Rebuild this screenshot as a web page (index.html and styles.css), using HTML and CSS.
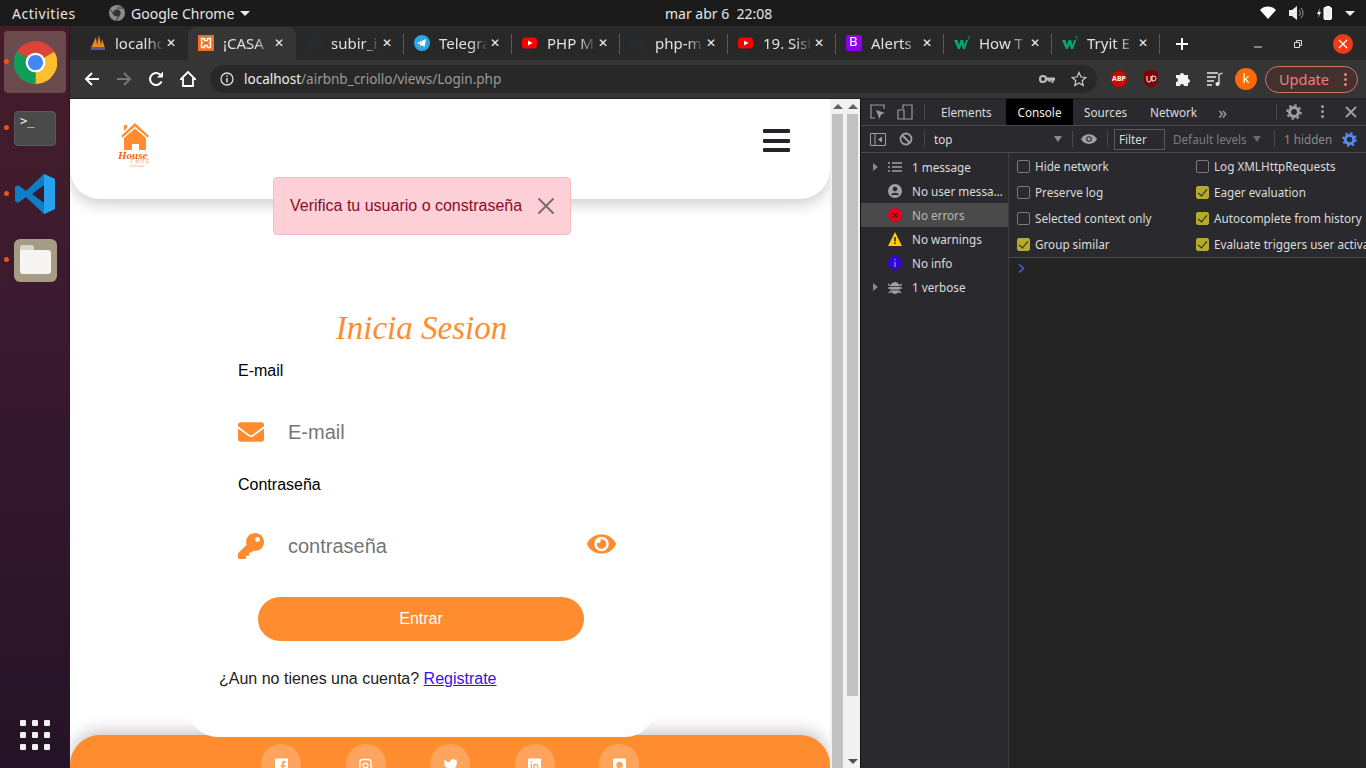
FILE: index.html
```html
<!DOCTYPE html>
<html lang="es">
<head>
  <meta charset="UTF-8" />
  <title>Login</title>
  <link rel="stylesheet" href="styles.css">
</head>
<body>
  <div class="topbar">
    <span class="activities">Activities</span>
    <span class="app-menu">
      <svg class="app-icon" width="16" height="16" viewBox="0 0 16 16"><circle cx="8" cy="8" r="8" fill="#8b8b8b"/><circle cx="8" cy="8" r="3.6" fill="#333"/><path d="M8 3h6M5 10 2 5M10 11l-3 5" stroke="#333" stroke-width="1"/></svg>
      Google Chrome
      <i class="caret"></i>
    </span>
    <span class="clock">mar abr 6&nbsp; 22:08</span>
    <span class="tray">
      <svg width="16" height="14" viewBox="0 0 16 14"><path d="M0 4a11 11 0 0 1 16 0L8 13z" fill="#fff"/></svg>
      <svg class="tray-sound" width="16" height="14" viewBox="0 0 16 14"><path d="M0 4h3l5-4v14l-5-4H0z" fill="#eee"/><path d="M10 4a4 4 0 0 1 0 6M12 2a7 7 0 0 1 0 10" stroke="#999" fill="none"/></svg>
      <svg class="tray-batt" width="16" height="14" viewBox="0 0 16 14"><path d="M3 2 0 8h2l-1 4 3-6H2z" fill="#fff"/><rect x="7" y="1.500" width="7.500" height="12" rx="1" fill="#eee" stroke="#fff"/><rect x="9" y="0" width="4" height="2" fill="#fff"/></svg>
      <i class="caret tray-caret"></i>
    </span>
  </div>

  <div class="desktop">
    <aside class="dock">
      <div class="dock-item active">
        <i class="dot"></i>
        <svg width="43" height="43" viewBox="0 0 48 48">
          <circle cx="24" cy="24" r="24" fill="#db4437"/>
          <path d="M24 24 45 12A24 24 0 0 1 24 48z" fill="#fbc02d"/>
          <path d="M24 24 24 48A24 24 0 0 1 3 12z" fill="#0f9d58"/>
          <circle cx="24" cy="24" r="11" fill="#fff"/>
          <circle cx="24" cy="24" r="8.500" fill="#4285f4"/>
        </svg>
      </div>
      <div class="dock-item">
        <i class="dot"></i>
        <div class="term-icon"><span>&gt;_</span></div>
      </div>
      <div class="dock-item">
        <i class="dot"></i>
        <svg width="42" height="42" viewBox="0 0 42 42">
          <path d="M30 1 41 6v30l-11 5L12 24 4 30l-3-2V14l3-2 8 6z" fill="#0e7fc4"/>
          <path d="M30 1 41 6v30l-11 5z" fill="#27a3ee"/>
          <path d="M30 12 18 21l12 9z" fill="#3a1a30"/>
        </svg>
      </div>
      <div class="dock-item">
        <i class="dot"></i>
        <div class="files-icon"><div class="folder"></div></div>
      </div>
      <div class="dock-grid">
        <i></i><i></i><i></i><i></i><i></i><i></i><i></i><i></i><i></i>
      </div>
    </aside>

    <div class="window">
      <div class="tabstrip">
        <div class="tab">
          <svg class="fav" viewBox="0 0 16 16"><path d="M1 13 6 2l1 8 2-10 2 10 1-6 3 9z" fill="#e98a1f"/><rect x="1" y="12" width="14" height="3" fill="#5a5a8c"/></svg>
          <span class="tab-title">localho</span><span class="tab-x">&#10005;</span>
        </div>
        <div class="tab tab-active">
          <svg class="fav" viewBox="0 0 16 16"><rect width="16" height="16" fill="#f36f1f"/><path d="M3.500 3.500h3v2h3v-2h3v3.500l-1 1 1 1v3.500h-3v-2h-3v2h-3V9l1-1-1-1z" fill="none" stroke="#fff" stroke-width="1.400"/></svg>
          <span class="tab-title">¡CASA</span><span class="tab-x">&#10005;</span>
        </div>
        <div class="tab">
          <svg class="fav" viewBox="0 0 16 16"><circle cx="8" cy="8" r="8" fill="#262b30"/></svg>
          <span class="tab-title">subir_i</span><span class="tab-x">&#10005;</span>
        </div>
        <div class="tab">
          <svg class="fav" viewBox="0 0 16 16"><circle cx="8" cy="8" r="8" fill="#2ca5e0"/><path d="M3 8l9-4-1.500 8-3-2-1.500 1.500V9l4-3-5 3z" fill="#fff"/></svg>
          <span class="tab-title">Telegra</span><span class="tab-x">&#10005;</span>
        </div>
        <div class="tab">
          <svg class="fav" viewBox="0 0 16 16"><rect y="2.500" width="15" height="11" rx="3" fill="#f00"/><path d="M6 5.500 10.500 8 6 10.500z" fill="#fff"/></svg>
          <span class="tab-title">PHP M</span><span class="tab-x">&#10005;</span>
        </div>
        <div class="tab">
          <svg class="fav" viewBox="0 0 16 16"><circle cx="8" cy="8" r="8" fill="#262b30"/></svg>
          <span class="tab-title">php-m</span><span class="tab-x">&#10005;</span>
        </div>
        <div class="tab">
          <svg class="fav" viewBox="0 0 16 16"><rect y="2.500" width="15" height="11" rx="3" fill="#f00"/><path d="M6 5.500 10.500 8 6 10.500z" fill="#fff"/></svg>
          <span class="tab-title">19. Sist</span><span class="tab-x">&#10005;</span>
        </div>
        <div class="tab">
          <svg class="fav" viewBox="0 0 16 16"><rect width="16" height="16" rx="2" fill="#8a00f0"/></svg>
          <span class="fav-letter">B</span>
          <span class="tab-title">Alerts</span><span class="tab-x">&#10005;</span>
        </div>
        <div class="tab">
          <svg class="fav" viewBox="0 0 16 16"><path d="M0 5h3.500l1.500 5 1.500-5h2.500l1.500 5 1.500-5H14l-3 9H9L7.500 9 6 14H4z" fill="#04aa6d"/><path d="M13.500 1.500h2l-1 1.200c1 0 1 2-.8 1.600" fill="none" stroke="#04aa6d" stroke-width=".7"/></svg>
          <span class="tab-title">How T</span><span class="tab-x">&#10005;</span>
        </div>
        <div class="tab">
          <svg class="fav" viewBox="0 0 16 16"><path d="M0 5h3.500l1.500 5 1.500-5h2.500l1.500 5 1.500-5H14l-3 9H9L7.500 9 6 14H4z" fill="#04aa6d"/><path d="M13.500 1.500h2l-1 1.200c1 0 1 2-.8 1.600" fill="none" stroke="#04aa6d" stroke-width=".7"/></svg>
          <span class="tab-title">Tryit E</span><span class="tab-x">&#10005;</span>
        </div>
        <span class="new-tab">
          <svg width="14" height="14" viewBox="0 0 14 14"><path d="M7 1v12M1 7h12" stroke="#fff" stroke-width="2"/></svg>
        </span>
        <div class="win-btns">
          <svg width="10" height="10" viewBox="0 0 10 10"><path d="M1 8h8" stroke="#ddd" stroke-width="1"/></svg>
          <svg width="10" height="10" viewBox="0 0 10 10"><path d="M1.500 3.500h5v5h-5zM3.500 3.500v-2h5v5h-2" fill="none" stroke="#ddd"/></svg>
          <span class="win-close">
            <svg width="10" height="10" viewBox="0 0 10 10"><path d="M1 1l8 8M9 1l-8 8" stroke="#fff" stroke-width="1.300"/></svg>
          </span>
        </div>
      </div>

      <div class="toolbar">
        <svg class="nav-icon" width="16" height="16" viewBox="0 0 16 16"><path d="M15 8H2M8 2 2 8l6 6" fill="none" stroke="#fff" stroke-width="2"/></svg>
        <svg class="nav-icon" width="16" height="16" viewBox="0 0 16 16"><path d="M1 8h13M8 2l6 6-6 6" fill="none" stroke="#777" stroke-width="2"/></svg>
        <svg class="nav-icon" width="16" height="16" viewBox="0 0 16 16"><path d="M13.500 10.500A6 6 0 1 1 12 3.500" fill="none" stroke="#fff" stroke-width="2"/><path d="M9 6.500h6v-6z" fill="#fff"/></svg>
        <svg class="nav-icon" width="16" height="16" viewBox="0 0 16 16"><path d="M8 1 1 8h2v7h10V8h2z" fill="none" stroke="#fff" stroke-width="1.800"/></svg>
        <div class="omnibox">
          <svg width="14" height="14" viewBox="0 0 14 14"><circle cx="7" cy="7" r="6" fill="none" stroke="#ddd" stroke-width="1.300"/><path d="M7 6v4.500M7 3.200v1.500" stroke="#ddd" stroke-width="1.500"/></svg>
          <span class="url"><b>localhost</b>/airbnb_criollo/views/Login.php</span>
          <svg class="omni-key" width="16" height="10" viewBox="0 0 16 10"><circle cx="4" cy="5" r="3" fill="none" stroke="#bbb" stroke-width="2.200"/><path d="M6 3.500h10v3h-1.500V9h-2V6.500h-1V8h-2V6.500H6z" fill="#bbb"/></svg>
          <svg class="omni-star" width="16" height="16" viewBox="0 0 16 16"><path d="M8 1.500l2 4.500 4.800.5-3.600 3.200 1 4.800L8 12l-4.200 2.500 1-4.800L1.200 6.500 6 6z" fill="none" stroke="#ccc" stroke-width="1.200"/></svg>
        </div>
        <div class="ext abp">ABP</div>
        <svg class="ext" width="16" height="18" viewBox="0 0 16 18"><path d="M1 2 8 0l7 2v8c0 4-4 6-7 8-3-2-7-4-7-8z" fill="#800000"/><path d="M4 6v4a2 2 0 0 0 4 0V6M9 6h1.500a2.500 2.500 0 0 1 0 5H9z" fill="none" stroke="#fff"/></svg>
        <svg class="ext" width="16" height="16" viewBox="0 0 16 16"><path d="M1 4h4a2 2 0 1 1 4 0h4v4a2 2 0 1 1 0 4v3H9a2 2 0 1 0-4 0H1v-4a2 2 0 1 0 0-4z" fill="#f2f2f2"/></svg>
        <svg class="ext" width="16" height="14" viewBox="0 0 16 14"><path d="M0 1h11M0 5h9M0 9h7M0 13h5" stroke="#e8e8e8" stroke-width="1.300"/><path d="M12 12V2.500L15.500 1" fill="none" stroke="#e8e8e8" stroke-width="1.300"/><circle cx="10.500" cy="12" r="2" fill="#e8e8e8"/></svg>
        <div class="avatar">k</div>
        <div class="update">Update<span class="update-dots"><i></i><i></i><i></i></span></div>
      </div>

      <div class="content">
        <div class="page">
          <header class="site-header">
            <svg class="logo" width="34" height="44" viewBox="0 0 34 44">
              <path d="M3 13 17 0l14 13-1.500 1.500L17 3.500 4.500 14.500z"/>
              <path d="M6 2h3v3L6 8z"/>
              <path d="M6 15 17 5.500 28 15v12h-7v-6h-7v6H6z"/>
              <text x="0" y="36" class="logo-house">House</text>
              <text x="12" y="40" class="logo-rent">rent</text>
              <text x="12" y="43.500" class="logo-small">en tu casa</text>
            </svg>
            <div class="burger"><i></i><i></i><i></i></div>
          </header>

          <div class="alert">
            <span>Verifica tu usuario o constraseña</span>
            <svg width="18" height="18" viewBox="0 0 18 18"><path d="M1.500 1.500l15 15M16.500 1.500l-15 15" stroke="#7d6a6e" stroke-width="2"/></svg>
          </div>

          <main class="card">
            <h2 class="card-title">Inicia Sesion</h2>
            <form class="login-form">
              <label class="field-label">E-mail</label>
              <div class="field">
                <svg class="field-icon" width="26" height="26" viewBox="0 0 512 512"><path d="M502.3 190.8c3.900-3.100 9.700-.2 9.700 4.700V400c0 26.500-21.500 48-48 48H48c-26.500 0-48-21.500-48-48V195.600c0-5 5.700-7.800 9.700-4.700 22.400 17.400 52.100 39.500 154.100 113.600 21.100 15.400 56.700 47.800 92.200 47.600 35.700.3 72-32.800 92.300-47.600 102-74.100 131.600-96.300 154-113.700zM256 320c23.200.4 56.600-29.200 73.400-41.400 132.700-96.300 142.800-104.700 173.400-128.700 5.800-4.500 9.200-11.500 9.200-18.900v-19c0-26.500-21.500-48-48-48H48C21.500 64 0 85.500 0 112v19c0 7.400 3.400 14.300 9.200 18.900 30.600 23.900 40.700 32.400 173.400 128.700 16.800 12.200 50.200 41.800 73.400 41.400z"/></svg>
                <input class="field-input" type="text" placeholder="E-mail">
              </div>
              <label class="field-label label-pass">Contraseña</label>
              <div class="field">
                <svg class="field-icon" width="26" height="26" viewBox="0 0 512 512"><path d="M512 176.001C512 273.203 433.202 352 336 352c-11.220 0-22.190-1.062-32.827-3.069l-24.012 27.014A23.999 23.999 0 0 1 261.223 384H224v40c0 13.255-10.745 24-24 24h-40v40c0 13.255-10.745 24-24 24H24c-13.255 0-24-10.745-24-24v-78.059c0-6.365 2.529-12.470 7.029-16.971l161.802-161.802C163.108 213.814 160 195.271 160 176 160 78.798 238.797.001 335.999 0 433.488-.001 512 78.511 512 176.001zM336 128c0 26.510 21.490 48 48 48s48-21.490 48-48-21.490-48-48-48-48 21.490-48 48z"/></svg>
                <input class="field-input" type="password" placeholder="contraseña">
                <svg class="eye" width="29" height="26" viewBox="0 0 576 512"><path d="M572.520 241.400C518.290 135.590 410.930 64 288 64S57.680 135.640 3.480 241.410a32.350 32.350 0 0 0 0 29.190C57.710 376.410 165.070 448 288 448s230.320-71.640 284.520-177.410a32.350 32.350 0 0 0 0-29.190zM288 400a144 144 0 1 1 144-144 143.930 143.930 0 0 1-144 144zm0-240a95.310 95.310 0 0 0-25.310 3.790 47.850 47.850 0 0 1-66.900 66.900A95.780 95.780 0 1 0 288 160z"/></svg>
              </div>
              <button class="btn-enter" type="button">Entrar</button>
            </form>
            <p class="register">¿Aun no tienes una cuenta? <a href="#">Registrate</a></p>
          </main>

          <footer class="site-footer">
            <span class="social"><svg viewBox="0 0 14 14"><path d="M1 0h12a1 1 0 0 1 1 1v13H9.500V9H11l.3-2H9.500V5.500c0-.6.3-1 1-1h1V2.500H10C8 2.500 7.500 4 7.500 5.500V7H6v2h1.500v5H0V1a1 1 0 0 1 1-1z"/></svg></span>
            <span class="social"><svg viewBox="0 0 14 14"><rect x="1" y="1" width="12" height="13" rx="3" fill="none" stroke="#fff" stroke-width="1.500"/><circle cx="7" cy="7.500" r="2.500" fill="none" stroke="#fff" stroke-width="1.500"/></svg></span>
            <span class="social"><svg viewBox="0 0 14 14"><path d="M0 1c2 2 4 3 6.500 3C6.500 1 10-.5 12 1.500L14 1l-1 2 1 .5c0 5-3 10-9 10-2 0-3.500-.5-5-1.500 2 0 3.500-.5 4.500-1.500C2 10 .5 8 0 6.500h1.500C.3 5 0 3 0 1z"/></svg></span>
            <span class="social"><svg viewBox="0 0 14 14"><path d="M1 0h12a1 1 0 0 1 1 1v13H0V1a1 1 0 0 1 1-1z"/><path d="M3.500 3v1.500M3.500 6v6M6.500 12V6M6.500 8c1-2.500 4-2 4 .5V12" fill="none" stroke="#ffa45c" stroke-width="1.500"/></svg></span>
            <span class="social"><svg viewBox="0 0 14 14"><path d="M1 0h12a1 1 0 0 1 1 1v13H0V1a1 1 0 0 1 1-1z"/><circle cx="7" cy="7" r="3.500" fill="#ffa45c"/></svg></span>
          </footer>
        </div>

        <div class="scrollbar"><i class="arrow-up"></i><i class="thumb thumb-full"></i></div>
        <div class="scrollbar"><i class="arrow-up"></i><i class="thumb thumb-short"></i><i class="arrow-down"></i></div>

        <section class="devtools">
          <div class="dt-tabs">
            <svg class="dt-icon" width="16" height="16" viewBox="0 0 16 16"><path d="M5 14H1V1h13v4" fill="none" stroke="#9a9a9a" stroke-width="1.200"/><path d="M6 6l9 3-4 1.500L9.500 15z" fill="#9a9a9a"/></svg>
            <svg class="dt-icon dt-device" width="16" height="16" viewBox="0 0 16 16"><path d="M6 5V1h9v14H6M1 6h6v9H1z" fill="none" stroke="#9a9a9a" stroke-width="1.200"/></svg>
            <i class="dt-sep sep-tabs"></i>
            <span class="dt-tab tab-elements">Elements</span>
            <span class="dt-tab dt-tab-on">Console</span>
            <span class="dt-tab tab-sources">Sources</span>
            <span class="dt-tab tab-network">Network</span>
            <span class="dt-more">&raquo;</span>
            <i class="dt-sep sep-more"></i>
            <svg class="dt-icon" width="16" height="16" viewBox="0 0 16 16"><circle cx="8" cy="8" r="4.500" fill="none" stroke="#a0a0a0" stroke-width="3"/><circle cx="8" cy="8" r="6.800" fill="none" stroke="#a0a0a0" stroke-width="2" stroke-dasharray="2.500 2.840"/></svg>
            <span class="dt-dots"><i></i><i></i><i></i></span>
            <svg class="dt-close" width="12" height="12" viewBox="0 0 12 12"><path d="M1 1l10 10M11 1 1 11" stroke="#a0a0a0" stroke-width="1.800"/></svg>
          </div>
          <div class="dt-filter">
            <svg class="dt-icon" width="16" height="13" viewBox="0 0 16 13"><path d="M.5.500h15v12H.5zM5 .5v12" fill="none" stroke="#a0a0a0"/><path d="M12 3.500v6L8 6.500z" fill="#a0a0a0"/></svg>
            <svg class="dt-icon dt-block" width="14" height="14" viewBox="0 0 14 14"><circle cx="7" cy="7" r="5.500" fill="none" stroke="#a0a0a0" stroke-width="1.800"/><path d="M3 3l8 8" stroke="#a0a0a0" stroke-width="1.800"/></svg>
            <i class="dt-sep sep-block"></i>
            <span class="ctx">top</span>
            <i class="tri ctx-tri"></i>
            <i class="dt-sep sep-ctx"></i>
            <svg class="dt-eye" width="16" height="10" viewBox="0 0 16 10"><path d="M0 5c3-6.500 13-6.500 16 0-3 6.500-13 6.500-16 0z" fill="#a0a0a0"/><circle cx="8" cy="5" r="2.800" fill="#2a2a2e"/><circle cx="8" cy="5" r="1.700" fill="#a0a0a0"/></svg>
            <i class="dt-sep sep-eye"></i>
            <span class="filter-box">Filter</span>
            <span class="levels">Default levels</span>
            <i class="tri levels-tri"></i>
            <i class="dt-sep sep-levels"></i>
            <span class="hidden-count">1 hidden</span>
            <svg class="dt-gear" width="15" height="15" viewBox="0 0 16 16"><circle cx="8" cy="8" r="4.500" fill="none" stroke="#5b8cf5" stroke-width="3"/><circle cx="8" cy="8" r="6.800" fill="none" stroke="#5b8cf5" stroke-width="2" stroke-dasharray="2.500 2.840"/></svg>
          </div>
          <div class="dt-body">
            <div class="dt-side">
              <div class="side-row"><i class="side-tri"></i><svg width="14" height="14" viewBox="0 0 14 14"><path d="M0 3h2M4 3h10M0 7h2M4 7h10M0 11h2M4 11h10" stroke="#a0a0a0" stroke-width="1.500"/></svg><span>1 message</span></div>
              <div class="side-row"><svg width="14" height="14" viewBox="0 0 14 14"><circle cx="7" cy="7" r="7" fill="#a0a0a0"/><circle cx="7" cy="5" r="2.300" fill="#2a2a2e"/><path d="M3 11c1-3 7-3 8 0z" fill="#2a2a2e"/></svg><span>No user messa…</span></div>
              <div class="side-row side-on"><svg width="14" height="14" viewBox="0 0 14 14"><circle cx="7" cy="7" r="7" fill="#e8001c"/><path d="M4.500 4.500l5 5M9.500 4.500l-5 5" stroke="#70101a" stroke-width="1.500"/></svg><span>No errors</span></div>
              <div class="side-row"><svg width="14" height="14" viewBox="0 0 14 14"><path d="M7 0l7 14H0z" fill="#fc0"/><path d="M7 5v4.500M7 10.500V12" stroke="#222" stroke-width="1.500"/></svg><span>No warnings</span></div>
              <div class="side-row"><svg width="14" height="14" viewBox="0 0 14 14"><circle cx="7" cy="7" r="7" fill="#3006d8"/><path d="M7 6v5M7 3v1.500" stroke="#8a78e8" stroke-width="1.500"/></svg><span>No info</span></div>
              <div class="side-row"><i class="side-tri"></i><svg width="14" height="14" viewBox="0 0 14 14"><ellipse cx="7" cy="8" rx="5" ry="6" fill="#a0a0a0"/><path d="M0 4l3 2M14 4l-3 2M0 8h3M14 8h-3M1 13l2-2M13 13l-2-2" stroke="#a0a0a0" stroke-width="1.500"/><path d="M2 6.500h10M2 10h10" stroke="#2a2a2e" stroke-width=".8"/></svg><span>1 verbose</span></div>
            </div>
            <div class="dt-main">
              <div class="settings">
                <label class="opt"><i class="box"></i>Hide network</label>
                <label class="opt"><i class="box"></i>Log XMLHttpRequests</label>
                <label class="opt"><i class="box"></i>Preserve log</label>
                <label class="opt"><i class="box on"></i>Eager evaluation</label>
                <label class="opt"><i class="box"></i>Selected context only</label>
                <label class="opt"><i class="box on"></i>Autocomplete from history</label>
                <label class="opt"><i class="box on"></i>Group similar</label>
                <label class="opt"><i class="box on"></i>Evaluate triggers user activa</label>
              </div>
              <div class="prompt">
                <svg width="7" height="9" viewBox="0 0 7 9"><path d="M1 .500 5.500 4.500 1 8.500" fill="none" stroke="#4a5fe0" stroke-width="1.500"/></svg>
              </div>
            </div>
          </div>
        </section>
      </div>
    </div>
  </div>
</body>
</html>
```
FILE: styles.css
```css
* {
  box-sizing: border-box;
}
html, body {
  margin: 0;
  height: 768px;
  overflow: hidden;
}
body {
  font-family: 'Noto Sans', 'Open Sans', sans-serif;
  background: #1c1c1c;
  color: #eee;
}
i {
  display: block;
  font-style: normal;
}

/* ubuntu top bar */
.topbar {
  height: 26px;
  background: #1b1b1b;
  display: flex;
  align-items: center;
  font-size: 14px;
  color: #e6e6e6;
  position: relative;
}
.activities {
  margin-left: 12px;
  width: 97px;
  letter-spacing: .55px;
}
.app-menu {
  display: flex;
  align-items: center;
}
.app-icon {
  margin-right: 6px;
}
.caret {
  width: 0;
  height: 0;
  border-left: 5px solid transparent;
  border-right: 5px solid transparent;
  border-top: 5px solid #eee;
  margin-left: 6px;
}
.clock {
  position: absolute;
  left: 665px;
  top: 4px;
  font-size: 14px;
}
.tray {
  margin-left: auto;
  margin-right: 11px;
  display: flex;
  align-items: center;
}
.tray-sound {
  margin-left: 13px;
}
.tray-batt {
  margin-left: 12px;
}
.tray-caret {
  margin-left: 12px;
}

.desktop {
  display: flex;
  height: 742px;
}

/* dock */
.dock {
  width: 70px;
  background: linear-gradient(#451c28, #3a1a30 40%, #241326);
  display: flex;
  flex-direction: column;
  padding: 5px 4px 0;
  position: relative;
  border-right: 1px solid #2b1622;
}
.dock-item {
  width: 62px;
  height: 62px;
  margin-bottom: 4px;
  border-radius: 4px;
  display: flex;
  align-items: center;
  justify-content: center;
  position: relative;
}
.dock-item.active {
  background: #6b4a4e;
}
.dot {
  position: absolute;
  left: 0;
  top: 28px;
  width: 5px;
  height: 5px;
  border-radius: 50%;
  background: #e95420;
}
.term-icon {
  width: 42px;
  height: 35px;
  border-radius: 4px;
  background: #4a4a4a;
  border: 1px solid #5a5a5a;
  font-family: 'DejaVu Sans Mono', monospace;
  font-size: 12px;
  line-height: 12px;
  padding: 3px 5px;
  color: #eee;
}
.files-icon {
  width: 43px;
  height: 43px;
  border-radius: 6px;
  background: #a49c86;
  display: flex;
  align-items: center;
  justify-content: center;
}
.folder {
  width: 31px;
  height: 24px;
  margin-top: 4px;
  border-radius: 0 3px 3px 3px;
  background: #f6f5f2;
  position: relative;
}
.folder::before {
  content: '';
  position: absolute;
  left: 0;
  top: -5px;
  width: 14px;
  height: 5px;
  border-radius: 3px 3px 0 0;
  background: #d8d5cc;
}
.dock-grid {
  position: absolute;
  left: 20px;
  top: 694px;
  display: grid;
  grid-template-columns: repeat(3, 6px);
  gap: 6px;
}
.dock-grid i {
  height: 6px;
  border-radius: 1px;
  background: #f0f0f0;
}

.window {
  flex: 1;
  display: flex;
  flex-direction: column;
  min-width: 0;
}

/* tabs */
.tabstrip {
  height: 34px;
  background: #282828;
  display: flex;
  padding: 1px 0 0 10px;
  position: relative;
}
.tab {
  width: 108px;
  height: 33px;
  display: flex;
  align-items: center;
  padding: 0 11px 2px 10px;
  font-size: 15px;
  color: #e0e0e0;
  position: relative;
  flex: none;
}
.tab::after {
  content: '';
  position: absolute;
  right: 0;
  top: 7px;
  width: 1px;
  height: 20px;
  background: #5a5a5a;
}
.tab:first-child::after {
  display: none;
}
.tab-active {
  background: #353535;
  border-radius: 8px 8px 0 0;
}
.tab-active::after {
  display: none;
}
.fav {
  width: 16px;
  height: 16px;
  flex: none;
  margin-right: 9px;
}
.fav-letter {
  position: absolute;
  left: 13px;
  top: 5px;
  font-size: 13px;
  color: #fff;
}
.tab-title {
  flex: 1;
  overflow: hidden;
  white-space: nowrap;
  -webkit-mask-image: linear-gradient(90deg, #000 65%, transparent 98%);
  mask-image: linear-gradient(90deg, #000 65%, transparent 98%);
}
.tab-x {
  width: 12px;
  font-size: 12px;
  color: #eee;
  flex: none;
  text-align: center;
}
.new-tab {
  margin-left: 15px;
  display: flex;
  align-items: center;
}
.win-btns {
  margin-left: auto;
  margin-right: 13px;
  display: flex;
  align-items: center;
  gap: 30px;
}
.win-close {
  width: 20px;
  height: 20px;
  border-radius: 50%;
  background: #f03a17;
  display: flex;
  align-items: center;
  justify-content: center;
}

/* toolbar */
.toolbar {
  height: 38px;
  background: #353535;
  display: flex;
  align-items: center;
  padding-left: 14px;
}
.nav-icon {
  margin-right: 16px;
  flex: none;
}
.omnibox {
  width: 887px;
  height: 28px;
  margin-left: -2px;
  border-radius: 14px;
  background: #282828;
  display: flex;
  align-items: center;
  padding: 0 10px;
}
.url {
  margin-left: 10px;
  font-size: 13.500px;
  color: #9a9a9a;
}
.url b {
  font-weight: 400;
  color: #eee;
}
.omni-key {
  margin-left: auto;
}
.omni-star {
  margin-left: 16px;
}
.ext {
  margin-left: 16px;
  flex: none;
}
.ext.abp {
  margin-left: 14px;
  width: 16px;
  height: 16px;
  border-radius: 50%;
  background: #d90000;
  color: #fff;
  font-size: 7px;
  font-weight: 700;
  line-height: 16px;
  text-align: center;
}
.avatar {
  width: 22px;
  height: 22px;
  margin-left: 12px;
  border-radius: 50%;
  background: #f76b0a;
  color: #fff;
  font-size: 13px;
  line-height: 21px;
  text-align: center;
}
.update {
  width: 93px;
  height: 27px;
  margin-left: 8px;
  border-radius: 14px;
  border: 1px solid #d8736c;
  background: #453030;
  color: #e8827a;
  font-size: 14.500px;
  line-height: 25px;
  padding-left: 13px;
  display: flex;
  position: relative;
}
.update-dots {
  position: absolute;
  right: 10px;
  top: 6px;
}
.update-dots i {
  width: 3px;
  height: 3px;
  border-radius: 50%;
  background: #e8827a;
  margin-bottom: 2px;
}

/* page */
.content {
  height: 670px;
  display: flex;
  border-top: 1px solid #1f1f1f;
}
.page {
  width: 760px;
  height: 100%;
  background: #fff;
  overflow: hidden;
  position: relative;
  font-family: 'Liberation Sans', Arial, sans-serif;
  color: #000;
  flex: none;
}
.site-header {
  height: 100px;
  border-radius: 0 0 30px 30px;
  background: #fff;
  box-shadow: 0 5px 15px rgba(0, 0, 0, .2);
  display: flex;
  justify-content: space-between;
  padding: 24px 40px 0 48px;
  position: relative;
  z-index: 2;
}
.logo {
  fill: #ff8c2e;
}
.logo-house {
  font-family: 'Liberation Serif', serif;
  font-style: italic;
  font-weight: 700;
  font-size: 11px;
  fill: #f4661e;
}
.logo-rent {
  font-family: 'Liberation Mono', monospace;
  font-size: 7px;
  letter-spacing: 1px;
  fill: #ffa45c;
}
.logo-small {
  font-family: 'Liberation Sans', sans-serif;
  font-size: 3px;
  fill: #ff9a4c;
}
.burger {
  width: 27px;
  margin-top: 6px;
}
.burger i {
  height: 4px;
  background: #212529;
  border-radius: 1px;
  margin-bottom: 5.500px;
}
.alert {
  position: absolute;
  left: 203px;
  top: 78px;
  width: 298px;
  height: 58px;
  background: #fdd0d8;
  border: 1px solid #fbb9c5;
  border-radius: 4px;
  color: #8a0a2c;
  font-size: 16px;
  display: flex;
  align-items: center;
  justify-content: space-between;
  padding: 0 15px 0 16px;
  z-index: 3;
}
.card {
  width: 467px;
  height: 538px;
  margin-left: 118px;
  background: #fff;
  border-radius: 0 0 30px 30px;
  position: relative;
  z-index: 1;
  padding-top: 108px;
}
.card-title {
  margin: 0;
  text-align: center;
  font-family: 'Liberation Serif', serif;
  font-style: italic;
  font-weight: 400;
  font-size: 33px;
  line-height: 42px;
  color: #ff8c2e;
}
.login-form {
  padding-left: 50px;
}
.field-label {
  display: block;
  font-size: 16px;
  line-height: 20px;
  margin-top: 12px;
}
.label-pass {
  margin-top: 22px;
}
.field {
  height: 72px;
  display: flex;
  align-items: center;
  width: 378px;
  padding-top: 29px;
}
.field-icon {
  fill: #ff8c2e;
  flex: none;
}
.field-input {
  flex: 1;
  min-width: 0;
  margin: 2px 0 0 24px;
  border: 0;
  outline: 0;
  background: transparent;
  font-family: 'Liberation Sans', Arial, sans-serif;
  font-size: 20px;
  padding: 0;
}
.eye {
  fill: #ff8c2e;
  flex: none;
  margin-top: -3px;
}
.btn-enter {
  display: block;
  width: 326px;
  height: 44px;
  margin: 30px 0 0 20px;
  border: 0;
  border-radius: 22px;
  background: #ff8c2e;
  color: #fff;
  font-family: 'Liberation Sans', Arial, sans-serif;
  font-size: 16px;
}
.register {
  margin: 28px 0 0 31px;
  font-size: 16px;
  line-height: 20px;
  color: #222;
}
.register a {
  color: #3a0ff0;
}
.site-footer {
  height: 100px;
  margin-top: -2px;
  background: #ff8c2e;
  border-radius: 30px 30px 0 0;
  box-shadow: 0 -5px 15px rgba(0, 0, 0, .2);
  display: flex;
  gap: 44.500px;
  padding: 9px 0 0 191px;
}
.social {
  width: 40px;
  height: 40px;
  border-radius: 50%;
  background: #ffa45c;
  display: flex;
  justify-content: center;
  padding-top: 14px;
  flex: none;
}
.social svg {
  width: 13px;
  height: 14px;
  fill: #fff;
}

/* the two scrollbars */
.scrollbar {
  width: 15px;
  height: 100%;
  background: #f1f1f1;
  padding: 5px 2px 0;
  flex: none;
  position: relative;
}
.arrow-up {
  width: 0;
  height: 0;
  margin: 0 auto 5px;
  border-left: 5px solid transparent;
  border-right: 5px solid transparent;
  border-bottom: 5px solid #606060;
}
.thumb {
  background: #c1c1c1;
}
.thumb-full {
  height: 660px;
}
.thumb-short {
  height: 582px;
}
.arrow-down {
  position: absolute;
  left: 2px;
  bottom: 4px;
  width: 0;
  height: 0;
  margin-left: 1px;
  border-left: 5px solid transparent;
  border-right: 5px solid transparent;
  border-top: 5px solid #505050;
}

/* devtools */
.devtools {
  flex: 1;
  min-width: 0;
  background: #242424;
  color: #dcdcdc;
  font-size: 11.700px;
  border-left: 1px solid #111;
  overflow: hidden;
}
.dt-tabs {
  height: 27px;
  background: #2a2a2e;
  border-bottom: 1px solid #4a4a4a;
  display: flex;
  align-items: center;
  padding-left: 9px;
}
.dt-filter {
  height: 27px;
  background: #2a2a2e;
  border-bottom: 1px solid #4a4a4a;
  display: flex;
  align-items: center;
  padding-left: 9px;
}
.dt-icon {
  flex: none;
}
.dt-device {
  margin-left: 11px;
}
.dt-block {
  margin-left: 13px;
}
.dt-sep {
  width: 1px;
  height: 16px;
  background: #4a4a4a;
  flex: none;
}
.sep-tabs {
  margin-left: 11px;
}
.dt-tab {
  height: 26px;
  line-height: 27px;
  flex: none;
}
.tab-elements {
  margin-left: 16px;
  width: 65px;
}
.dt-tab-on {
  width: 67px;
  background: #000;
  text-align: center;
  color: #eee;
}
.tab-sources {
  margin-left: 11px;
  width: 66px;
}
.tab-network {
  width: 68px;
}
.dt-more {
  font-size: 18px;
  line-height: 22px;
  color: #a0a0a0;
  width: 58px;
}
.sep-more {
  margin-right: 9px;
}
.dt-dots {
  margin-left: 19px;
}
.dt-dots i {
  width: 3px;
  height: 3px;
  border-radius: 50%;
  background: #a0a0a0;
  margin-bottom: 2px;
}
.dt-close {
  margin-left: 21px;
}
.sep-block {
  margin-left: 11px;
}
.ctx {
  margin-left: 9px;
  width: 120px;
}
.tri {
  width: 0;
  height: 0;
  border-left: 4px solid transparent;
  border-right: 4px solid transparent;
  border-top: 6px solid #8a8a8a;
  flex: none;
}
.sep-ctx {
  margin-left: 10px;
}
.dt-eye {
  margin-left: 8px;
  flex: none;
}
.sep-eye {
  margin-left: 10px;
}
.filter-box {
  width: 51px;
  height: 21px;
  margin-left: 6px;
  border: 1px solid #5a5a5a;
  line-height: 19px;
  padding-left: 4px;
  flex: none;
}
.levels {
  margin-left: 8px;
  width: 80px;
  color: #7d7d7d;
  white-space: nowrap;
}
.levels-tri {
  border-top-color: #6a6a6a;
}
.sep-levels {
  margin-left: 13px;
}
.hidden-count {
  margin-left: 9px;
  width: 58px;
  color: #8a8a8a;
  white-space: nowrap;
}
.dt-gear {
  flex: none;
}
.dt-body {
  display: flex;
  height: 616px;
}
.dt-side {
  width: 148px;
  background: #2a2a2e;
  padding-top: 2px;
  border-right: 1px solid #3d3d3d;
  flex: none;
}
.side-row {
  height: 24px;
  display: flex;
  align-items: center;
  padding-left: 27px;
  position: relative;
  white-space: nowrap;
}
.side-row span {
  margin-left: 10px;
}
.side-on {
  background: #4a4a4a;
  color: #b8b8b8;
}
.side-tri {
  position: absolute;
  left: 12px;
  top: 8px;
  width: 0;
  height: 0;
  border-top: 4px solid transparent;
  border-bottom: 4px solid transparent;
  border-left: 5px solid #8a8a8a;
}
.dt-main {
  flex: 1;
  min-width: 0;
}
.settings {
  height: 105px;
  background: #2a2a2e;
  border-bottom: 1px solid #4a4a4a;
  display: grid;
  grid-template-columns: 179px 179px;
  grid-auto-rows: 26px;
  padding: 0 0 0 8px;
  overflow: hidden;
}
.opt {
  display: flex;
  align-items: center;
  white-space: nowrap;
  overflow: hidden;
}
.box {
  width: 13px;
  height: 13px;
  margin-right: 5px;
  border: 1px solid #7a7a7a;
  border-radius: 2px;
  flex: none;
  position: relative;
}
.box.on {
  background: #b3ab2d;
  border-color: #b3ab2d;
}
.box.on::after {
  content: '';
  position: absolute;
  left: 3px;
  top: 0;
  width: 4px;
  height: 8px;
  border: solid #222;
  border-width: 0 1.500px 1.500px 0;
  transform: rotate(40deg);
}
.prompt {
  padding: 2px 0 0 9px;
}
```
